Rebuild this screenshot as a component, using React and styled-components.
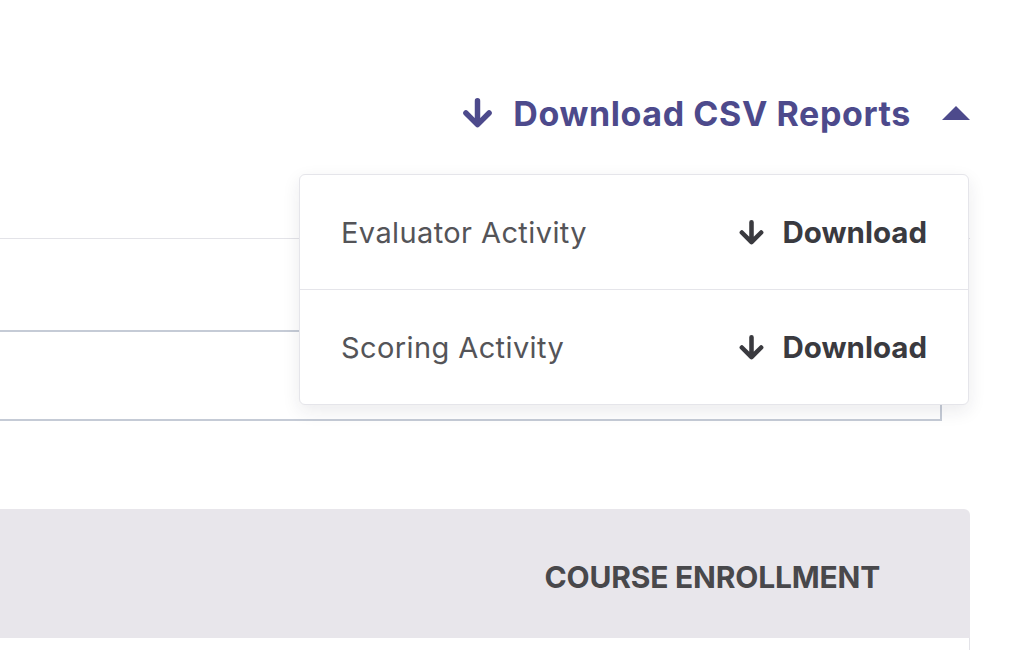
import React, { useState } from "react";
import styled, { createGlobalStyle } from "styled-components";

const GlobalStyle = createGlobalStyle`
  html, body {
    margin: 0;
    padding: 0;
    background: #ffffff;
    font-family: Inter, "Noto Sans", sans-serif;
    overflow: hidden;
  }
`;

const Page = styled.div`
  width: 970px;
  height: 650px;
`;

const Header = styled.div`
  position: relative;
  display: flex;
  justify-content: flex-end;
  padding-top: 92px;
  height: 146px;
  box-sizing: border-box;
`;

const Toggle = styled.button`
  display: flex;
  align-items: center;
  height: 42px;
  padding: 0;
  border: none;
  background: none;
  cursor: pointer;
  color: #4d4a8c;
  font-family: Inter, sans-serif;
  font-weight: 700;
  font-size: 34px;
  letter-spacing: 0.6px;
`;

const ToggleLabel = styled.span`
  margin-left: 19px;
  margin-right: 31px;
`;

const Caret = styled.span`
  width: 0;
  height: 0;
  border-left: 14.5px solid transparent;
  border-right: 14.5px solid transparent;
  border-bottom: 14px solid #4d4a8c;
  ${(p) => (!p.open ? "transform: rotate(180deg);" : "")}
`;

const Menu = styled.div`
  position: absolute;
  top: 174px;
  right: 1px;
  width: 668px;
  background: #fff;
  border: 1px solid #e5e5ea;
  border-radius: 6px;
  box-shadow: 0 6px 18px rgba(30, 30, 60, 0.09);
  z-index: 10;
`;

const MenuRow = styled.div`
  display: flex;
  align-items: center;
  justify-content: space-between;
  height: 114px;
  padding: 0 41px;
  border-top: ${(p) => (p.first ? "none" : "1px solid #e5e5ea")};
`;

const RowLabel = styled.span`
  font-size: 29px;
  color: #545458;
  letter-spacing: 0.4px;
`;

const RowAction = styled.a`
  display: flex;
  align-items: center;
  gap: 16px;
  font-size: 29.5px;
  font-weight: 700;
  color: #3a3a3f;
  text-decoration: none;
  cursor: pointer;
`;

const Filters = styled.div`
  border-top: 1px solid #e3e3e8;
  margin-top: 92px;
  padding-top: 91px;
`;

const SearchBox = styled.div`
  width: 940px;
  height: 87px;
  border: 2px solid #c5cbd6;
  border-left: none;
`;

const TableHead = styled.div`
  margin-top: 88px;
  height: 129px;
  background: #e8e6eb;
  border-top-right-radius: 6px;
  display: flex;
  align-items: center;
  justify-content: flex-end;
  padding-right: 90px;
`;

const HeadCell = styled.span`
  font-size: 30px;
  font-weight: 700;
  color: #48484b;
  text-transform: uppercase;
  letter-spacing: -0.2px;
  margin-top: 6px;
`;

const TableBody = styled.div`
  height: 40px;
  border-right: 1px solid #e3e3e8;
`;

const ArrowDown = ({ width = 33, height = 30 }) => (
  <svg width={width} height={height} viewBox="0 0 24 22" fill="none">
    <path
      d="M12 2v16.5M3.5 11L12 19.5l8.5-8.5"
      stroke="currentColor"
      strokeWidth="4"
      strokeLinecap="round"
      strokeLinejoin="round"
    />
  </svg>
);

const reports = ["Evaluator Activity", "Scoring Activity"];

export default function App() {
  const [open, setOpen] = useState(true);

  return (
    <Page>
      <GlobalStyle />
      <Header>
        <Toggle onClick={() => setOpen(!open)}>
          <ArrowDown />
          <ToggleLabel>Download CSV Reports</ToggleLabel>
          <Caret open={open} />
        </Toggle>
        {open && (
          <Menu>
            {reports.map((r, i) => (
              <MenuRow key={r} first={i === 0}>
                <RowLabel>{r}</RowLabel>
                <RowAction>
                  <ArrowDown width={29} height={25} />
                  Download
                </RowAction>
              </MenuRow>
            ))}
          </Menu>
        )}
      </Header>
      <Filters>
        <SearchBox />
      </Filters>
      <TableHead>
        <HeadCell>Course Enrollment</HeadCell>
      </TableHead>
      <TableBody />
    </Page>
  );
}
